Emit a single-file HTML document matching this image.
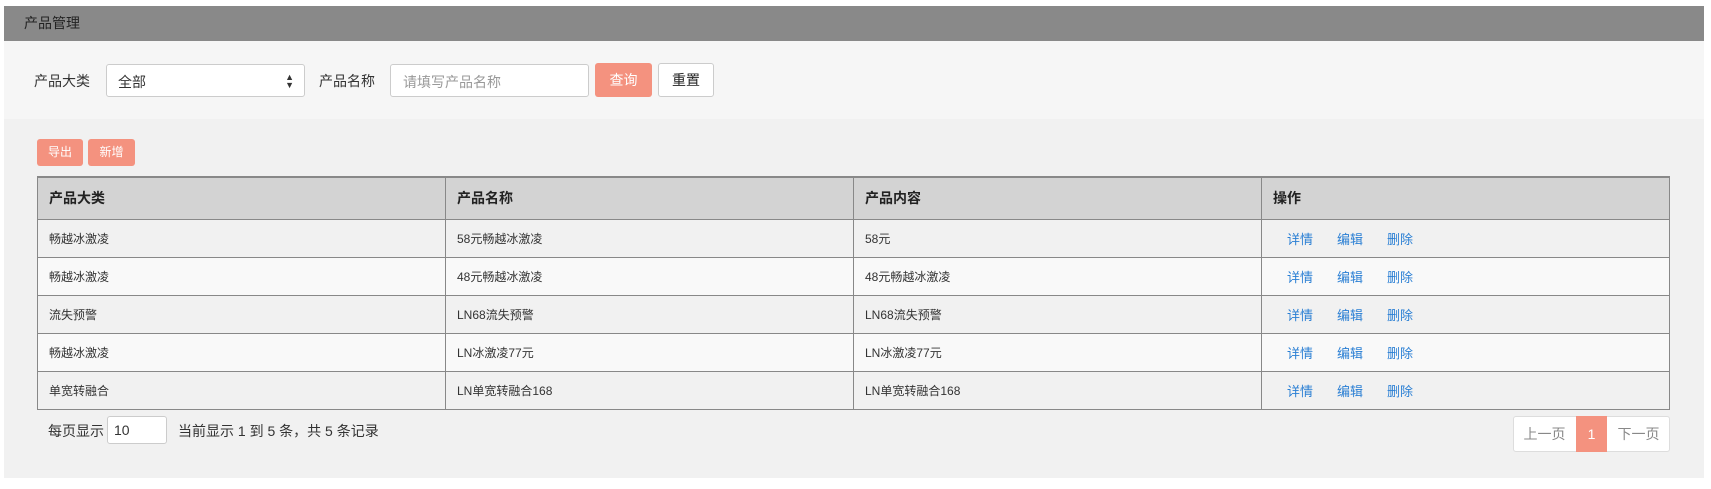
<!DOCTYPE html>
<html><head><meta charset="utf-8"><style>
*{box-sizing:border-box;margin:0;padding:0}
body{width:1711px;height:489px;background:#fff;font-family:"Liberation Sans","Noto Sans CJK SC",sans-serif;color:#333;position:relative;overflow:hidden}
.a{position:absolute}
.hd{left:4px;top:6px;width:1700px;height:35px;background:#898989;font-size:14px;color:#222;line-height:35px;padding-left:20px}
.fb{left:4px;top:41px;width:1700px;height:78px;background:#f6f6f6}
.bd{left:4px;top:119px;width:1700px;height:359px;background:#f1f1f1}
.lbl{font-size:14px;color:#333}
.box{background:#fff;border:1px solid #ccc;border-radius:3px;font-size:14px}
.btn{border-radius:3px;font-size:14px;text-align:center}
table{position:absolute;left:37px;top:176px;width:1633px;border-collapse:collapse;font-size:12px;border-top:2px solid #888}
td,th{border:1px solid #888;height:38px;text-align:left;padding-left:11px;width:408px}
th{background:#d3d3d3;height:42px;font-weight:bold;font-size:14px;color:#222}
tr:nth-child(odd) td{background:#f9f9f9}
tr:nth-child(even) td{background:#f1f1f1}
td a{color:#2a7fd4;font-size:13px;margin-left:14px;margin-right:10px;text-decoration:none}
</style></head><body>
<div class="a hd">产品管理</div>
<div class="a fb"></div>
<div class="a bd"></div>
<div class="a lbl" style="left:34px;top:71px">产品大类</div>
<div class="a box" style="left:106px;top:64px;width:199px;height:33px;padding:7px 11px">全部<span style="position:absolute;right:10px;top:8px;font-size:9px;line-height:8px">▲<br>▼</span></div>
<div class="a lbl" style="left:319px;top:71px">产品名称</div>
<div class="a box" style="left:390px;top:64px;width:199px;height:33px;padding:7px 12px;color:#999">请填写产品名称</div>
<div class="a btn" style="left:595px;top:63px;width:57px;height:34px;background:#f4927f;color:#fff;line-height:34px">查询</div>
<div class="a btn" style="left:658px;top:63px;width:56px;height:34px;background:#fff;border:1px solid #ccc;line-height:32px;color:#222">重置</div>
<div class="a btn" style="left:37px;top:139px;width:46px;height:27px;background:#f4927f;color:#fff;line-height:27px;font-size:12px">导出</div>
<div class="a btn" style="left:88px;top:139px;width:47px;height:27px;background:#f4927f;color:#fff;line-height:27px;font-size:12px">新增</div>
<table>
<tr><th>产品大类</th><th>产品名称</th><th>产品内容</th><th>操作</th></tr>
<tr><td>畅越冰激凌</td><td>58元畅越冰激凌</td><td>58元</td><td><a>详情</a><a>编辑</a><a>删除</a></td></tr>
<tr><td>畅越冰激凌</td><td>48元畅越冰激凌</td><td>48元畅越冰激凌</td><td><a>详情</a><a>编辑</a><a>删除</a></td></tr>
<tr><td>流失预警</td><td>LN68流失预警</td><td>LN68流失预警</td><td><a>详情</a><a>编辑</a><a>删除</a></td></tr>
<tr><td>畅越冰激凌</td><td>LN冰激凌77元</td><td>LN冰激凌77元</td><td><a>详情</a><a>编辑</a><a>删除</a></td></tr>
<tr><td>单宽转融合</td><td>LN单宽转融合168</td><td>LN单宽转融合168</td><td><a>详情</a><a>编辑</a><a>删除</a></td></tr>
</table>
<div class="a lbl" style="left:48px;top:421px">每页显示</div>
<div class="a box" style="left:107px;top:416px;width:60px;height:28px;padding:5px 6px;font-size:14px">10</div>
<div class="a lbl" style="left:178px;top:421px">当前显示 1 到 5 条，共 5 条记录</div>
<div class="a box" style="left:1513px;top:416px;width:157px;height:36px;border-color:#ddd"></div>
<div class="a" style="left:1513px;top:416px;width:63px;height:36px;line-height:36px;text-align:center;font-size:14px;color:#888">上一页</div>
<div class="a" style="left:1576px;top:416px;width:31px;height:36px;line-height:36px;text-align:center;font-size:14px;color:#fff;background:#f4927f">1</div>
<div class="a" style="left:1607px;top:416px;width:63px;height:36px;line-height:36px;text-align:center;font-size:14px;color:#888">下一页</div>
</body></html>
